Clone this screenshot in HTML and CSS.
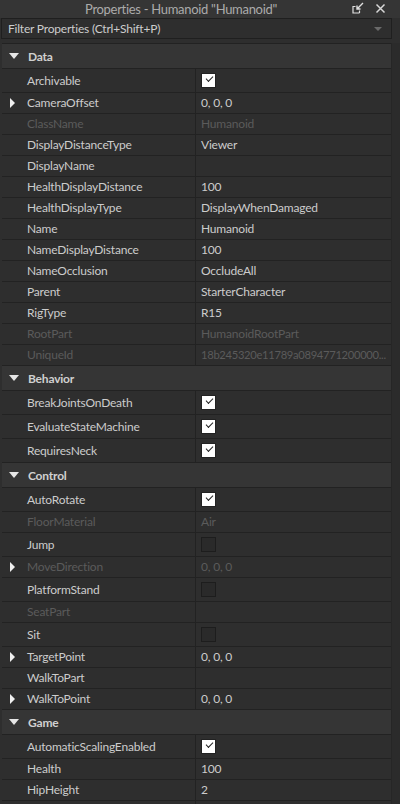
FILE: index.html
```html
<!DOCTYPE html>
<html>
<head>
<meta charset="utf-8">
<link rel="stylesheet" href="styles.css">
</head>
<body>
<div class="panel">
  <div class="titlebar">
    <span class="title">Properties - Humanoid "Humanoid"</span>
    <span class="tb-icons">
      <svg width="12" height="12" viewBox="0 0 12 12"><path d="M1 4.5 V11 H7.5 M1 11 L1 4.5 H3.5 M7.5 11 V8.5" fill="none" stroke="#e0e0e0" stroke-width="1.2"/><path d="M11 1 L5 7 M5 3.5 V7 H8.5" fill="none" stroke="#e0e0e0" stroke-width="1.4"/></svg>
      <svg width="11" height="11" viewBox="0 0 11 11"><path d="M1.5 1.5 L9.5 9.5 M9.5 1.5 L1.5 9.5" stroke="#d8d8d8" stroke-width="1.5"/></svg>
    </span>
  </div>
  <div class="filter">
    <span>Filter Properties (Ctrl+Shift+P)</span>
    <span class="dd"></span>
  </div>
  <div class="body">
    <div class="list">
      <div class="section"><span class="tri-down"></span>Data</div>
      <div class="row cb"><div class="name">Archivable</div><div class="val"><span class="check on"></span></div></div>
      <div class="row"><div class="name"><span class="tri-right"></span>CameraOffset</div><div class="val">0, 0, 0</div></div>
      <div class="row dis"><div class="name">ClassName</div><div class="val">Humanoid</div></div>
      <div class="row"><div class="name">DisplayDistanceType</div><div class="val">Viewer</div></div>
      <div class="row"><div class="name">DisplayName</div><div class="val"></div></div>
      <div class="row"><div class="name">HealthDisplayDistance</div><div class="val">100</div></div>
      <div class="row"><div class="name">HealthDisplayType</div><div class="val">DisplayWhenDamaged</div></div>
      <div class="row"><div class="name">Name</div><div class="val">Humanoid</div></div>
      <div class="row"><div class="name">NameDisplayDistance</div><div class="val">100</div></div>
      <div class="row"><div class="name">NameOcclusion</div><div class="val">OccludeAll</div></div>
      <div class="row"><div class="name">Parent</div><div class="val">StarterCharacter</div></div>
      <div class="row"><div class="name">RigType</div><div class="val">R15</div></div>
      <div class="row dis"><div class="name">RootPart</div><div class="val">HumanoidRootPart</div></div>
      <div class="row dis"><div class="name">UniqueId</div><div class="val long">18b245320e11789a0894771200000...</div></div>

      <div class="section"><span class="tri-down"></span>Behavior</div>
      <div class="row cb"><div class="name">BreakJointsOnDeath</div><div class="val"><span class="check on"></span></div></div>
      <div class="row cb"><div class="name">EvaluateStateMachine</div><div class="val"><span class="check on"></span></div></div>
      <div class="row cb"><div class="name">RequiresNeck</div><div class="val"><span class="check on"></span></div></div>

      <div class="section"><span class="tri-down"></span>Control</div>
      <div class="row cb"><div class="name">AutoRotate</div><div class="val"><span class="check on"></span></div></div>
      <div class="row dis"><div class="name">FloorMaterial</div><div class="val">Air</div></div>
      <div class="row cb"><div class="name">Jump</div><div class="val"><span class="check"></span></div></div>
      <div class="row dis"><div class="name"><span class="tri-right"></span>MoveDirection</div><div class="val">0, 0, 0</div></div>
      <div class="row cb"><div class="name">PlatformStand</div><div class="val"><span class="check"></span></div></div>
      <div class="row dis"><div class="name">SeatPart</div><div class="val"></div></div>
      <div class="row cb"><div class="name">Sit</div><div class="val"><span class="check"></span></div></div>
      <div class="row"><div class="name"><span class="tri-right"></span>TargetPoint</div><div class="val">0, 0, 0</div></div>
      <div class="row"><div class="name">WalkToPart</div><div class="val"></div></div>
      <div class="row"><div class="name"><span class="tri-right"></span>WalkToPoint</div><div class="val">0, 0, 0</div></div>

      <div class="section"><span class="tri-down"></span>Game</div>
      <div class="row cb"><div class="name">AutomaticScalingEnabled</div><div class="val"><span class="check on"></span></div></div>
      <div class="row"><div class="name">Health</div><div class="val">100</div></div>
      <div class="row"><div class="name">HipHeight</div><div class="val">2</div></div>
      <div class="row"><div class="name"></div><div class="val"></div></div>
    </div>
    <div class="scroll"></div>
  </div>
</div>
</body>
</html>
```

FILE: styles.css
```css
html, body {
  margin: 0;
  padding: 0;
  background: #2e2e2e;
  height: 804px;
  overflow: hidden;
}
.panel {
  font-family: "Lato", "Noto Sans", sans-serif;
  font-size: 12px;
  letter-spacing: -0.2px;
  color: #cccccc;
  display: flex;
  flex-direction: column;
  height: 804px;
}
.titlebar {
  height: 18px;
  background: #353535;
  display: flex;
  align-items: center;
  justify-content: center;
  padding-right: 38px;
  position: relative;
}
.title {
  color: #ababab;
  font-size: 13px;
  letter-spacing: -0.3px;
}
.tb-icons {
  position: absolute;
  right: 14px;
  top: 2px;
  display: flex;
  gap: 11px;
  align-items: center;
}
.filter {
  height: 19px;
  margin: 0 8px 0 1px;
  border: 1px solid #1f1f1f;
  background: #2e2e2e;
  display: flex;
  align-items: center;
  justify-content: space-between;
  padding: 0 9px 0 6px;
}
.dd {
  width: 0;
  height: 0;
  border-left: 4px solid transparent;
  border-right: 4px solid transparent;
  border-top: 4px solid #6a6a6a;
}
.body {
  display: flex;
  flex: 1;
  margin-top: 4px;
  min-height: 0;
}
.list {
  width: 390px;
  margin-left: 2px;
  border-top: 1px solid #222;
  overflow: hidden;
}
.scroll {
  width: 8px;
  background: #2b2b2b;
  border-left: 1px solid #262626;
}
.section {
  height: 24px;
  background: #353535;
  border-bottom: 1px solid #222;
  display: flex;
  align-items: center;
  font-weight: bold;
  padding-left: 7px;
  color: #d0d0d0;
}
.tri-down {
  width: 0;
  height: 0;
  border-left: 5px solid transparent;
  border-right: 5px solid transparent;
  border-top: 6px solid #e6e6e6;
  margin-right: 9px;
}
.tri-right {
  position: absolute;
  left: 8px;
  top: 50%;
  margin-top: -5px;
  width: 0;
  height: 0;
  border-top: 5px solid transparent;
  border-bottom: 5px solid transparent;
  border-left: 5px solid #f0f0f0;
}
.row {
  display: grid;
  grid-template-columns: 194px 1fr;
  height: 21px;
}
.row.cb {
  height: 24px;
}
.row > div {
  border-bottom: 1px solid #222;
  line-height: 20px;
  white-space: nowrap;
  overflow: hidden;
}
.row.cb > div {
  line-height: 23px;
}
.name {
  position: relative;
  padding-left: 25px;
  border-right: 1px solid #222;
}
.val {
  padding-left: 5px;
}
.val.long {
  font-size: 11.2px;
  letter-spacing: -0.3px;
  padding-left: 5px;
}
.row.dis {
  color: #5b5b5b;
}
.check {
  display: inline-block;
  vertical-align: middle;
  margin-top: -2px;
  width: 13px;
  height: 13px;
  border: 1px solid #1d1d1d;
  background: #2a2a2a;
  position: relative;
}
.check.on {
  background: #ffffff;
  border-color: #222;
}
.check.on::after {
  content: "";
  position: absolute;
  left: 3.5px;
  top: 2px;
  width: 6px;
  height: 3px;
  border-left: 1.6px solid #222;
  border-bottom: 1.6px solid #222;
  transform: rotate(-45deg);
}
```
